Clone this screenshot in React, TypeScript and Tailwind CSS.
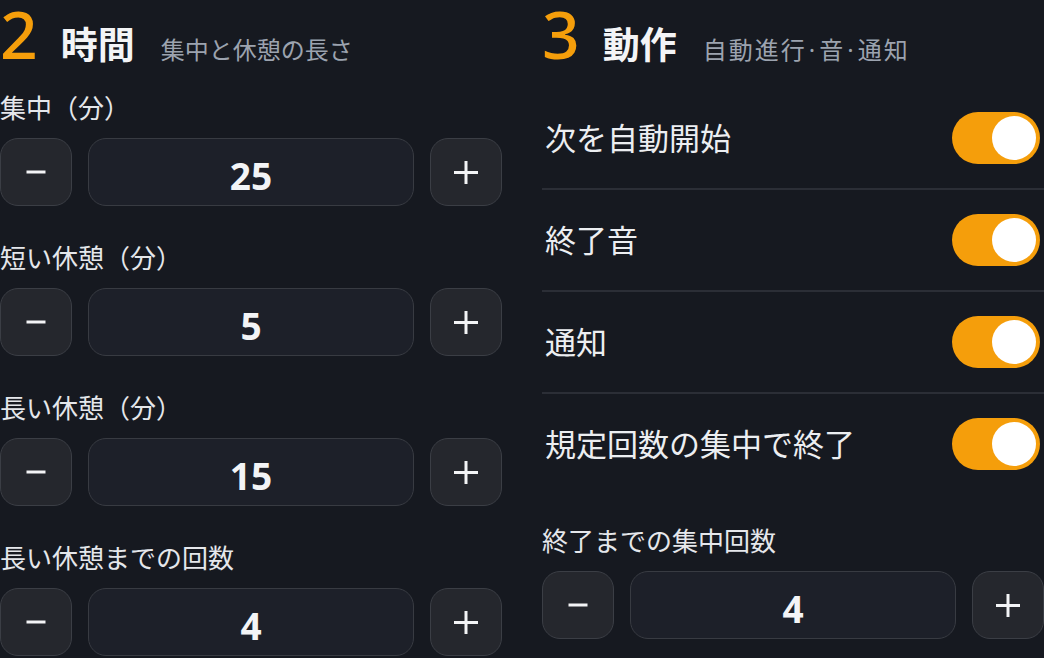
import React from "react";

const fields = [
  { label: "集中（分）", value: 25 },
  { label: "短い休憩（分）", value: 5 },
  { label: "長い休憩（分）", value: 15 },
  { label: "長い休憩までの回数", value: 4 },
];

const toggles = ["次を自動開始", "終了音", "通知", "規定回数の集中で終了"];

function SectionHeader({ num, title, children }: { num: string; title: string; children: React.ReactNode }) {
  return (
    <div className="flex h-[66px] items-baseline">
      <span className="text-[66px] font-medium leading-none text-[#f59e0b]">{num}</span>
      <span className="ml-[23px] text-[37px] font-bold leading-none text-[#f3f4f6]">{title}</span>
      <span className="ml-[26px] text-[24px] leading-none text-[#9ca3af]">{children}</span>
    </div>
  );
}

function Stepper({ value }: { value: number }) {
  return (
    <div className="flex h-[68px] gap-4">
      <button className="flex w-[72px] items-center justify-center rounded-[18px] border border-[#3b3e45] bg-[#25272d]">
        <svg width="20" height="4" viewBox="0 0 20 4">
          <rect x="0.5" y="0.5" width="19" height="3" fill="#f3f4f6" />
        </svg>
      </button>
      <div className="flex flex-1 items-center justify-center rounded-[18px] border border-[#383b42] bg-[#1d2029] pt-2 text-[37px] font-bold text-[#f3f4f6]">
        {value}
      </div>
      <button className="flex w-[72px] items-center justify-center rounded-[18px] border border-[#3b3e45] bg-[#25272d]">
        <svg width="26" height="24" viewBox="0 0 26 24">
          <path d="M1 12.5H25M13 1V24" stroke="#f3f4f6" strokeWidth="3" />
        </svg>
      </button>
    </div>
  );
}

function Toggle() {
  return (
    <div className="mr-1 flex h-[52px] w-[88px] items-center justify-end rounded-full bg-[#f59e0b] pr-1">
      <div className="h-[44px] w-[44px] rounded-full bg-white" />
    </div>
  );
}

export default function App() {
  return (
    <div className="h-[658px] w-[1044px] overflow-hidden bg-[#161920] font-['Noto_Sans','Noto_Sans_CJK_JP',sans-serif]">
      <div className="grid grid-cols-[502px_502px] gap-x-10">
        {/* Time */}
        <div>
          <SectionHeader num="2" title="時間">
            集中と休憩の長さ
          </SectionHeader>
          <div className="mt-[22px] flex flex-col gap-8">
            {fields.map((f) => (
              <div key={f.label}>
                <p className="mb-[10px] text-[26px] leading-[40px] text-[#e5e7eb]">{f.label}</p>
                <Stepper value={f.value} />
              </div>
            ))}
          </div>
        </div>

        {/* Behaviour */}
        <div>
          <SectionHeader num="3" title="動作">
            <span className="tracking-[2px]">
              自動進行<span className="mx-[2px]">·</span>音<span className="mx-[2px]">·</span>通知
            </span>
          </SectionHeader>
          <div className="mt-[22px]">
            {toggles.map((t, i) => (
              <div
                key={t}
                className={`flex h-[100px] items-center justify-between ${
                  i < toggles.length - 1 ? "box-content border-b-2 border-[#2b2e36]" : ""
                }`}
              >
                <span className="pl-[3px] text-[31px] leading-none text-[#eceef1]">{t}</span>
                <Toggle />
              </div>
            ))}
          </div>
          <div className="mt-[27px]">
            <p className="mb-[10px] text-[26px] leading-[40px] text-[#e5e7eb]">終了までの集中回数</p>
            <Stepper value={4} />
          </div>
        </div>
      </div>
    </div>
  );
}
